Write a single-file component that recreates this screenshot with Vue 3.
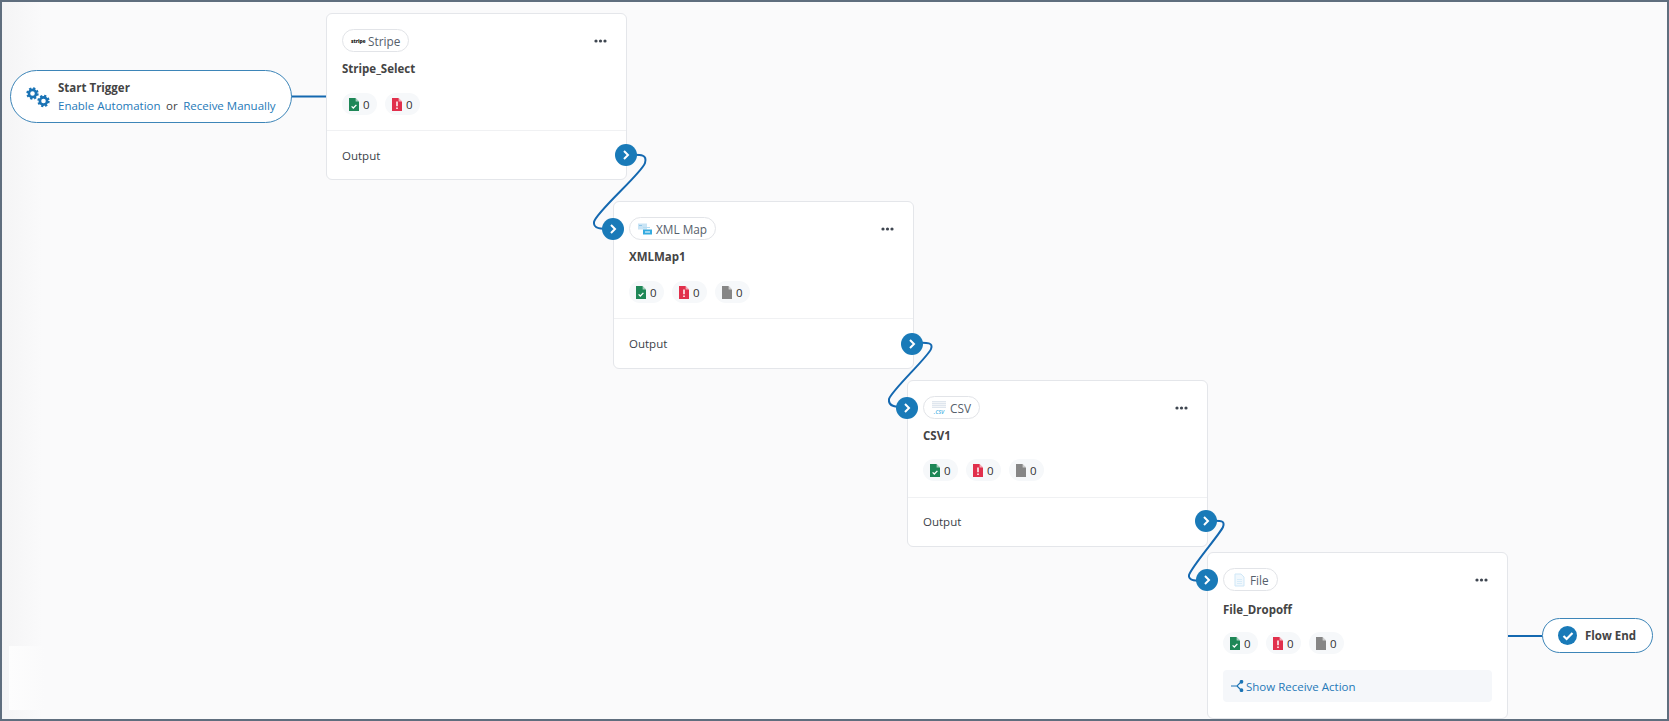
<script setup>
const cards = [
  { id: 'stripe', x: 326, y: 13, h: 167, pill: 'Stripe', title: 'Stripe_Select', stats: ['ok', 'err'], output: true, input: false },
  { id: 'xml', x: 613, y: 201, h: 168, pill: 'XML Map', title: 'XMLMap1', stats: ['ok', 'err', 'skip'], output: true, input: true },
  { id: 'csv', x: 907, y: 380, h: 167, pill: 'CSV', title: 'CSV1', stats: ['ok', 'err', 'skip'], output: true, input: true },
  { id: 'file', x: 1207, y: 552, h: 167, pill: 'File', title: 'File_Dropoff', stats: ['ok', 'err', 'skip'], output: false, input: true }
]
const statColor = { ok: '#1e8757', err: '#e1304c', skip: '#868686' }
const wires = [
  'M626 155 C638 155 648 153 645 163 C642 173 596 212 594 222 C593 229 601 229 613 229',
  'M912 343 C924 343 934 341 931 349 C928 357 892 390 889 399 C888 407 896 407 907 407',
  'M1206 521 C1218 521 1226 519 1223 527 C1220 534 1192 566 1189 575 C1188 581 1196 581 1207 581'
]
const stubs = [
  'M291 96.5 L326 96.5',
  'M1507 636 L1542 636'
]
</script>

<template>
  <div class="canvas">
    <div class="fade-patch"></div>

    <svg class="wires" width="1669" height="721" viewBox="0 0 1669 721" fill="none">
      <path v-for="d in stubs" :key="d" :d="d" stroke="#1468b0" stroke-width="2" />
    </svg>

    <div class="trigger">
      <svg class="gears" width="26" height="22" viewBox="0 0 26 22" fill="none" stroke="#1a73b5">
        <g>
          <circle cx="7.5" cy="7.5" r="5" stroke-width="2.4" stroke-dasharray="2.1 1.83" />
          <circle cx="7.5" cy="7.5" r="3.6" stroke-width="2.6" />
          <circle cx="18.5" cy="15" r="5" stroke-width="2.4" stroke-dasharray="2.1 1.83" />
          <circle cx="18.5" cy="15" r="3.6" stroke-width="2.6" />
        </g>
      </svg>
      <div class="trigger-text">
        <div class="trigger-title">Start Trigger</div>
        <div class="trigger-links">
          <span class="link">Enable Automation</span>
          <span class="or">or</span>
          <span class="link">Receive Manually</span>
        </div>
      </div>
    </div>

    <div
      v-for="c in cards"
      :key="c.id"
      class="card"
      :class="'card-' + c.id"
      :style="{ left: c.x + 'px', top: c.y + 'px', height: c.h + 'px' }"
    >
      <div class="card-body">
        <div class="head">
          <span class="pill">
            <span v-if="c.id === 'stripe'" class="stripe-logo">stripe</span>
            <svg v-else-if="c.id === 'xml'" width="14" height="12" viewBox="0 0 14 12">
              <rect x="0" y="0.5" width="9" height="6" fill="#c9e4f5" />
              <rect x="1" y="2" width="3" height="1" fill="#8fc6e8" />
              <rect x="5" y="4" width="7" height="1" fill="#b7dcf2" />
              <rect x="5" y="6.5" width="9" height="5" fill="#35abe0" />
              <rect x="7" y="8.5" width="5" height="1" fill="#fff" />
            </svg>
            <span v-else-if="c.id === 'csv'" class="csv-logo"><i></i><b>.csv</b></span>
            <svg v-else width="14" height="14" viewBox="0 0 14 14" fill="none">
              <path d="M3 1 H9 L12 4 V13 H3 Z" fill="#f1f8fd" stroke="#cfe7f7" />
              <path d="M5 6.5 H10 M5 8.5 H10 M5 10.5 H10" stroke="#d8ecf9" />
            </svg>
            <span class="pill-label">{{ c.pill }}</span>
          </span>
          <svg class="dots" width="13" height="4" viewBox="0 0 13 4" fill="#3f4650">
            <circle cx="2" cy="2" r="1.6" />
            <circle cx="6.5" cy="2" r="1.6" />
            <circle cx="11" cy="2" r="1.6" />
          </svg>
        </div>
        <div class="title">{{ c.title }}</div>
        <div class="stats">
          <span v-for="s in c.stats" :key="s" class="stat">
            <svg width="10" height="13" viewBox="0 0 10 13">
              <path d="M0 0 H6.5 L10 3.5 V13 H0 Z" :fill="statColor[s]" />
              <path d="M6.6 0 V3.4 H10 Z" fill="#fff" opacity="0.6" />
              <path v-if="s === 'ok'" d="M2.6 8.4 L4.3 10 L7.4 6.9" stroke="#fff" stroke-width="1.3" fill="none" />
              <path v-if="s === 'err'" d="M5 3.6 V8.2 M5 9.4 V11" stroke="#fff" stroke-width="1.5" fill="none" />
            </svg>
            <span>0</span>
          </span>
        </div>
      </div>

      <div v-if="c.output" class="output"><span>Output</span></div>
      <div v-else class="receive">
        <svg width="13" height="12" viewBox="0 0 13 12" fill="none" stroke="#1a73b5" stroke-width="1.1">
          <path d="M0 6 H6 L10 2 M6 6 L10 10" />
          <circle cx="10.5" cy="1.8" r="1.3" fill="#1a73b5" />
          <circle cx="10.5" cy="10.2" r="1.3" fill="#1a73b5" />
        </svg>
        <span>Show Receive Action</span>
      </div>

      <span v-if="c.input" class="handle handle-in">
        <svg width="8" height="10" viewBox="0 0 8 10" fill="none"><path d="M2 1 L6 5 L2 9" stroke="#fff" stroke-width="2" /></svg>
      </span>
      <span v-if="c.output" class="handle handle-out">
        <svg width="8" height="10" viewBox="0 0 8 10" fill="none"><path d="M2 1 L6 5 L2 9" stroke="#fff" stroke-width="2" /></svg>
      </span>
    </div>

    <svg class="wires wires-top" width="1669" height="721" viewBox="0 0 1669 721" fill="none">
      <path v-for="d in wires" :key="d" :d="d" stroke="#1468b0" stroke-width="2" />
    </svg>

    <div class="flow-end">
      <span class="end-check">
        <svg width="12" height="10" viewBox="0 0 12 10" fill="none"><path d="M1.5 5 L4.6 8 L10.5 2" stroke="#fff" stroke-width="2.2" /></svg>
      </span>
      <span class="end-label">Flow End</span>
    </div>

    <div class="frame"></div>
  </div>
</template>

<style>
html, body { margin: 0; padding: 0; background: #fafafb; }
</style>

<style scoped>
.canvas {
  position: relative;
  width: 1669px;
  height: 721px;
  overflow: hidden;
  background: linear-gradient(90deg, #f4f4f5 0, #fafafb 42px);
  font-family: "Open Sans", "Noto Sans", sans-serif;
  font-size: 11.5px;
  color: #333;
}
.frame {
  position: absolute;
  inset: 0;
  border: 2px solid #5f6e7e;
  pointer-events: none;
  z-index: 10;
}
.fade-patch {
  position: absolute;
  left: 9px;
  top: 646px;
  width: 36px;
  height: 64px;
  background: linear-gradient(90deg, #fdfdfd, #fafafb);
}
.wires { position: absolute; left: 0; top: 0; }
.wires-top { z-index: 1; pointer-events: none; }

.trigger {
  position: absolute;
  left: 10px;
  top: 70px;
  width: 282px;
  height: 53px;
  box-sizing: border-box;
  display: flex;
  align-items: center;
  gap: 7px;
  padding-left: 14px;
  background: #fff;
  border: 1px solid #3d85b8;
  border-radius: 27px;
}
.gears { flex: none; }
.trigger-text { padding-top: 2px; }
.trigger-title { font-weight: 700; font-size: 11.5px; color: #444; line-height: 16px; }
.trigger-links { display: flex; gap: 5.5px; line-height: 20px; }
.link { color: #2579b8; }
.or { color: #444; }

.card {
  position: absolute;
  width: 301px;
  box-sizing: border-box;
  display: flex;
  flex-direction: column;
  background: #fff;
  border: 1px solid #e4e6ea;
  border-radius: 6px;
}
.card-body { padding: 15px 15px 0; }
.head { display: flex; align-items: center; justify-content: space-between; padding-right: 4px; }
.pill {
  display: inline-flex;
  align-items: center;
  gap: 4px;
  height: 23px;
  box-sizing: border-box;
  padding: 0 8px;
  border: 1px solid #e2e4e8;
  border-radius: 12px;
  color: #56606b;
  font-size: 11.8px;
}
.stripe-logo { width: 13px; font-size: 5px; font-weight: 800; color: #222; letter-spacing: -0.1px; }
.csv-logo { display: inline-flex; flex-direction: column; width: 14px; height: 14px; align-items: center; }
.csv-logo i { display: block; width: 14px; height: 7px; background: repeating-linear-gradient(0deg, #dfe6ee 0 1px, #f2f5f8 1px 2px); }
.csv-logo b { font-size: 6.5px; line-height: 7px; font-style: italic; font-weight: 400; color: #2ba6e0; }
.title { margin-top: 8px; font-weight: 700; color: #444; line-height: 18px; }
.stats { display: flex; gap: 8px; margin-top: 15px; }
.stat {
  display: inline-flex;
  align-items: center;
  gap: 4px;
  height: 22px;
  padding: 0 7px;
  width: 35px;
  box-sizing: border-box;
  background: #f6f8fa;
  border-radius: 11px;
}
.output {
  margin-top: 15px;
  flex: 1;
  display: flex;
  align-items: center;
  padding-left: 15px;
  border-top: 1px solid #f0f1f3;
  color: #3a3f48;
}
.receive {
  margin: 16px 15px 0;
  height: 32px;
  display: flex;
  align-items: center;
  gap: 2px;
  padding-left: 8px;
  background: #f5f7fa;
  border-radius: 4px;
  color: #2579b8;
}
.handle {
  position: absolute;
  width: 22px;
  height: 22px;
  display: flex;
  align-items: center;
  justify-content: center;
  background: #197ab8;
  border-radius: 50%;
  z-index: 2;
}
.handle-in { left: -12px; top: 16px; }
.handle-out { right: -11px; bottom: 13px; }

.card-xml .handle-out { right: -10px; }
.card-csv .handle-out { right: -10px; bottom: 14px; }
.card-csv .stats { margin-top: 14px; }
.card-csv .output { margin-top: 16px; padding-bottom: 2px; }
.card-file .title { margin-top: 10px; }
.card-file .stats { margin-top: 13px; }

.flow-end {
  position: absolute;
  left: 1542px;
  top: 618px;
  width: 111px;
  height: 35px;
  box-sizing: border-box;
  display: flex;
  align-items: center;
  gap: 8px;
  padding-left: 15px;
  background: #fff;
  border: 1px solid #3d85b8;
  border-radius: 18px;
}
.end-check {
  width: 19px;
  height: 19px;
  display: flex;
  align-items: center;
  justify-content: center;
  border-radius: 50%;
  background: #197ab8;
}
.end-label { font-weight: 700; color: #444; }
</style>
